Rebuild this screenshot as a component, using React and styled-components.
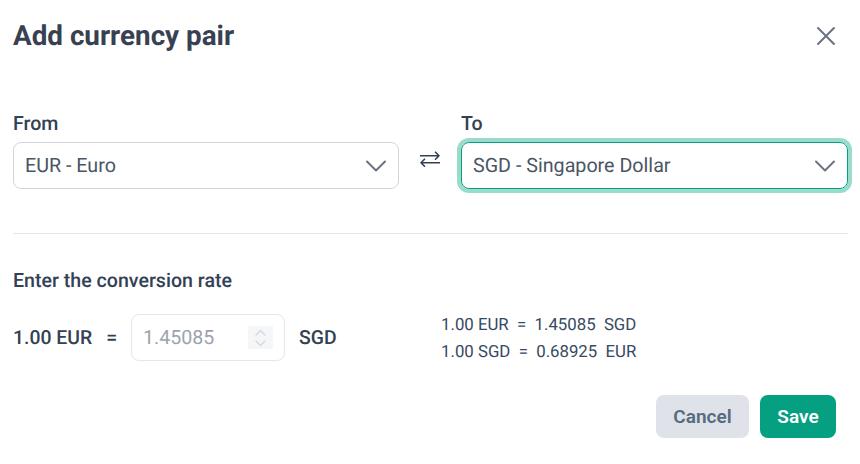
import React from "react";
import styled, { createGlobalStyle } from "styled-components";

const Global = createGlobalStyle`
  html, body { margin: 0; padding: 0; background: #fff; }
  body {
    font-family: Roboto, "Liberation Sans", sans-serif;
    color: #374151;
    text-rendering: geometricPrecision;
  }
  * { box-sizing: border-box; }
`;

const Dialog = styled.div`
  width: 860px;
  height: 464px;
  padding: 20px 12px 0 13px;
  display: flex;
  flex-direction: column;
`;
const Header = styled.div`
  display: flex;
  justify-content: space-between;
  align-items: center;
  height: 32px;
`;
const Title = styled.h2`
  margin: 0;
  font-size: 27.8px;
  line-height: 32px;
  font-weight: 700;
  color: #374151;
`;
const Close = styled.button`
  border: 0;
  padding: 0;
  background: none;
  width: 24px;
  height: 24px;
  margin-right: 10px;
  color: #6b7280;
  display: flex;
`;
const Pair = styled.div`
  margin-top: 60px;
  display: grid;
  grid-template-columns: 386px 62px 387px;
  padding-bottom: 44px;
  border-bottom: 1px solid #e5e7eb;
`;
const Field = styled.div`
  display: flex;
  flex-direction: column;
`;
const Label = styled.label`
  font-size: 19.6px;
  line-height: 24px;
  font-weight: 500;
  color: #334155;
  margin-bottom: 6px;
`;
const Select = styled.div`
  height: 47px;
  border-radius: 8px;
  border: 1px solid ${p => (p.$focused ? "#059f81" : "#d1d5db")};
  box-shadow: ${p => (p.$focused ? "0 0 0 4px #9adccb" : "none")};
  padding: 0 11px;
  display: flex;
  align-items: center;
  justify-content: space-between;
  font-size: 19.7px;
  color: #4b5563;
`;
const Chevron = styled.svg`
  width: 24px;
  height: 24px;
  color: #6b7280;
  margin-right: -1px;
`;
const Swap = styled.div`
  display: flex;
  justify-content: center;
  padding-top: 38px;
  color: #334155;
`;
const RateTitle = styled.div`
  margin-top: 35px;
  font-size: 19.6px;
  line-height: 24px;
  font-weight: 500;
  color: #334155;
`;
const RateRow = styled.div`
  margin-top: 21px;
  display: flex;
  align-items: center;
  height: 47px;
`;
const Amount = styled.span`
  font-size: 19.4px;
  font-weight: 500;
  color: #334155;
`;
const Equals = styled(Amount)`
  margin: 0 14px;
`;
const RateInput = styled.div`
  flex: 0 0 154px;
  height: 47px;
  border: 1px solid #e5e7eb;
  border-radius: 8px;
  padding: 0 11px;
  display: flex;
  align-items: center;
  justify-content: space-between;
  font-size: 19.6px;
  color: #9ca3af;
`;
const Stepper = styled.div`
  width: 25px;
  height: 23px;
  background: #f5f6f8;
  display: flex;
  align-items: center;
  justify-content: center;
`;
const Unit = styled(Amount)`
  margin-left: 14px;
  flex: 0 0 142px;
`;
const Rates = styled.div`
  font-size: 16.8px;
  line-height: 27px;
  padding-top: 2px;
  color: #374a5f;
  white-space: pre;
`;
const Footer = styled.div`
  margin-top: 34px;
  padding-right: 12px;
  display: flex;
  justify-content: flex-end;
  gap: 11px;
`;
const Button = styled.button`
  height: 43px;
  width: ${p => (p.$primary ? "76px" : "93px")};
  border: 0;
  border-radius: 8px;
  background: ${p => (p.$primary ? "#059f81" : "#dfe2e8")};
  color: ${p => (p.$primary ? "#fff" : "#566a80")};
  font-family: inherit;
  font-size: 19px;
  font-weight: 600;
`;

const ChevronDown = () => (
  <Chevron viewBox="0 0 24 24" fill="none" stroke="currentColor" strokeWidth="2" strokeLinecap="round" strokeLinejoin="round">
    <path d="M3 7.5 L12 16.5 L21 7.5" />
  </Chevron>
);

export default function App() {
  return (
    <Dialog>
      <Global />
      <Header>
        <Title>Add currency pair</Title>
        <Close aria-label="Close">
          <svg width="24" height="24" viewBox="0 0 24 24" fill="none" stroke="currentColor" strokeWidth="2" strokeLinecap="round">
            <path d="M4 4 L20 20 M20 4 L4 20" />
          </svg>
        </Close>
      </Header>
      <Pair>
        <Field>
          <Label>From</Label>
          <Select>EUR - Euro<ChevronDown /></Select>
        </Field>
        <Swap>
          <svg width="20" height="18" viewBox="0 0 20 18" fill="none" stroke="currentColor" strokeWidth="1.6" strokeLinecap="round" strokeLinejoin="round">
            <path d="M0.5 5.7 H19 M15.5 2.2 L19 5.7 L15.5 9.2 M19.5 12.7 H1 M4.5 9.2 L1 12.7 L4.5 16.2" />
          </svg>
        </Swap>
        <Field>
          <Label>To</Label>
          <Select $focused>SGD - Singapore Dollar<ChevronDown /></Select>
        </Field>
      </Pair>
      <RateTitle>Enter the conversion rate</RateTitle>
      <RateRow>
        <Amount>1.00 EUR</Amount>
        <Equals>=</Equals>
        <RateInput>
          1.45085
          <Stepper>
            <svg width="13" height="20" viewBox="0 0 13 20" fill="none" stroke="#d6dade" strokeWidth="1.5" strokeLinecap="round" strokeLinejoin="round">
              <path d="M2 7 L6.5 2.5 L11 7 M2 13 L6.5 17.5 L11 13" />
            </svg>
          </Stepper>
        </RateInput>
        <Unit>SGD</Unit>
        <Rates>
          <div>1.00 EUR  =  1.45085  SGD</div>
          <div>1.00 SGD  =  0.68925  EUR</div>
        </Rates>
      </RateRow>
      <Footer>
        <Button>Cancel</Button>
        <Button $primary>Save</Button>
      </Footer>
    </Dialog>
  );
}
